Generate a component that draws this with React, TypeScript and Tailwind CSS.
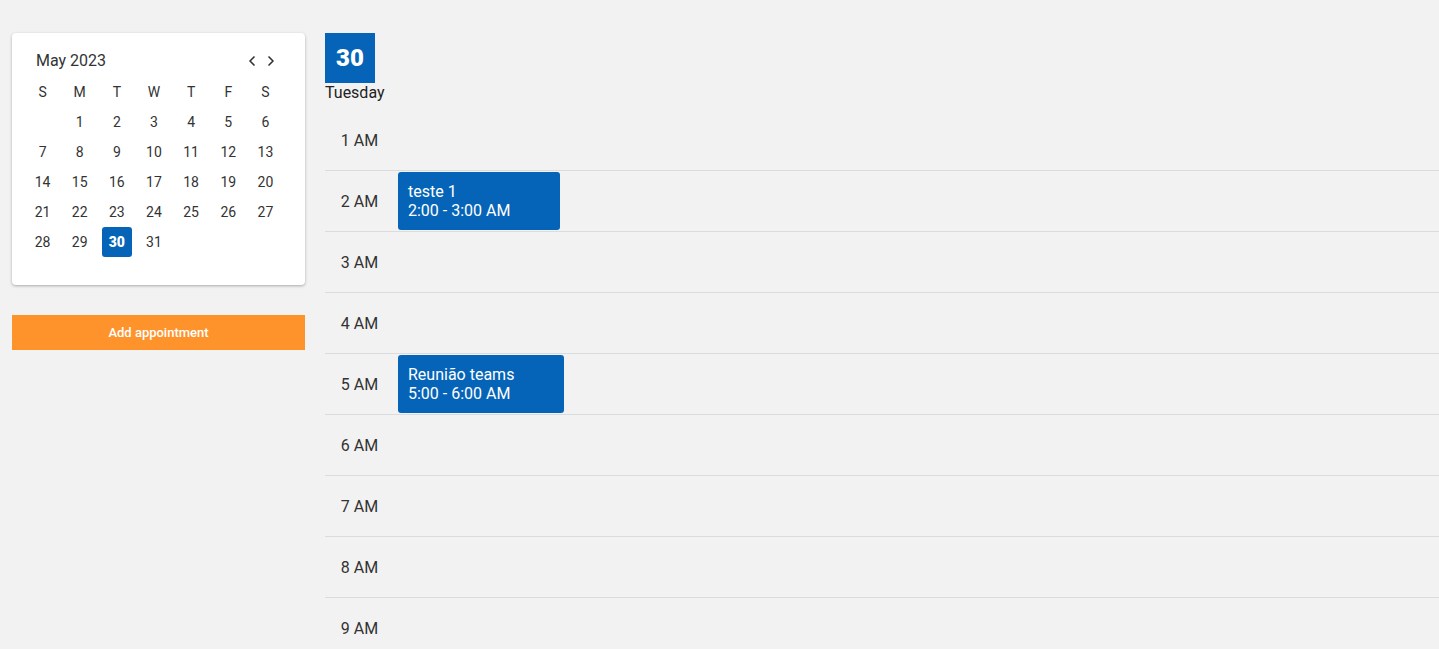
import { ChevronLeft, ChevronRight } from "lucide-react";

const weeks: (number | null)[][] = [
  [null, 1, 2, 3, 4, 5, 6],
  [7, 8, 9, 10, 11, 12, 13],
  [14, 15, 16, 17, 18, 19, 20],
  [21, 22, 23, 24, 25, 26, 27],
  [28, 29, 30, 31, null, null, null],
];

const hours = ["1 AM", "2 AM", "3 AM", "4 AM", "5 AM", "6 AM", "7 AM", "8 AM", "9 AM", "10 AM"];

const events: Record<string, { title: string; time: string; width: string }> = {
  "2 AM": { title: "teste 1", time: "2:00 - 3:00 AM", width: "w-[162px]" },
  "5 AM": { title: "Reunião teams", time: "5:00 - 6:00 AM", width: "w-[166px]" },
};

function MiniCalendar() {
  return (
    <div className="bg-white rounded shadow-[0_1px_3px_rgba(0,0,0,0.3)] pt-[17px] pb-[28px]">
      <div className="flex items-center justify-between pl-[24px] pr-[26px] h-[22px]">
        <span className="text-[16px] text-[#333]">May 2023</span>
        <div className="flex items-center gap-[3px] text-[#333]">
          <ChevronLeft size={16} strokeWidth={2.5} />
          <ChevronRight size={16} strokeWidth={2.5} />
        </div>
      </div>
      <div className="ml-[12px] w-[260px] mt-[5px]">
        <div className="grid grid-cols-7 h-[30px] items-center">
          {["S", "M", "T", "W", "T", "F", "S"].map((d, i) => (
            <div key={i} className="text-center text-[14px] text-[#333]">
              {d}
            </div>
          ))}
        </div>
        {weeks.map((w, i) => (
          <div key={i} className="grid grid-cols-7 h-[30px] items-center">
            {w.map((d, j) => (
              <div key={j} className="flex justify-center">
                {d === 30 ? (
                  <span className="w-[30px] h-[30px] flex items-center justify-center rounded-[3px] bg-[#0564b8] text-white font-black text-[14px]">
                    30
                  </span>
                ) : (
                  <span className="text-[14px] text-[#333]">{d ?? ""}</span>
                )}
              </div>
            ))}
          </div>
        ))}
      </div>
    </div>
  );
}

export default function App() {
  return (
    <div className="h-[649px] overflow-hidden bg-[#f2f2f2] flex font-['Roboto',sans-serif]">
      <aside className="w-[293px] ml-[12px] pt-[33px] shrink-0">
        <MiniCalendar />
        <button className="mt-[30px] w-full h-[35px] bg-[#ff932b] text-white text-[13px] font-medium">
          Add appointment
        </button>
      </aside>
      <main className="flex-1 ml-[20px] pt-[33px]">
        <div className="w-[50px] h-[50px] bg-[#0564b8] text-white font-black text-[24px] flex items-center justify-center">
          30
        </div>
        <div className="text-[16px] text-[#222] leading-[19px]">Tuesday</div>
        <div className="mt-[7px]">
          {hours.map((h, i) => {
            const ev = events[h];
            return (
              <div
                key={h}
                className={`flex h-[61px] ${i > 0 ? "border-t border-[#dcdcdc]" : ""}`}
              >
                <div className="w-[69px] flex items-center justify-center pt-[2px] text-[16px] text-[#333]">
                  {h}
                </div>
                {ev && (
                  <div
                    className={`${ev.width} ml-[4px] mt-[1px] h-[58px] bg-[#0564b8] rounded-[3px] text-white text-[16px] leading-[19px] px-[10px] pt-[10px]`}
                  >
                    <div>{ev.title}</div>
                    <div>{ev.time}</div>
                  </div>
                )}
              </div>
            );
          })}
        </div>
      </main>
    </div>
  );
}
